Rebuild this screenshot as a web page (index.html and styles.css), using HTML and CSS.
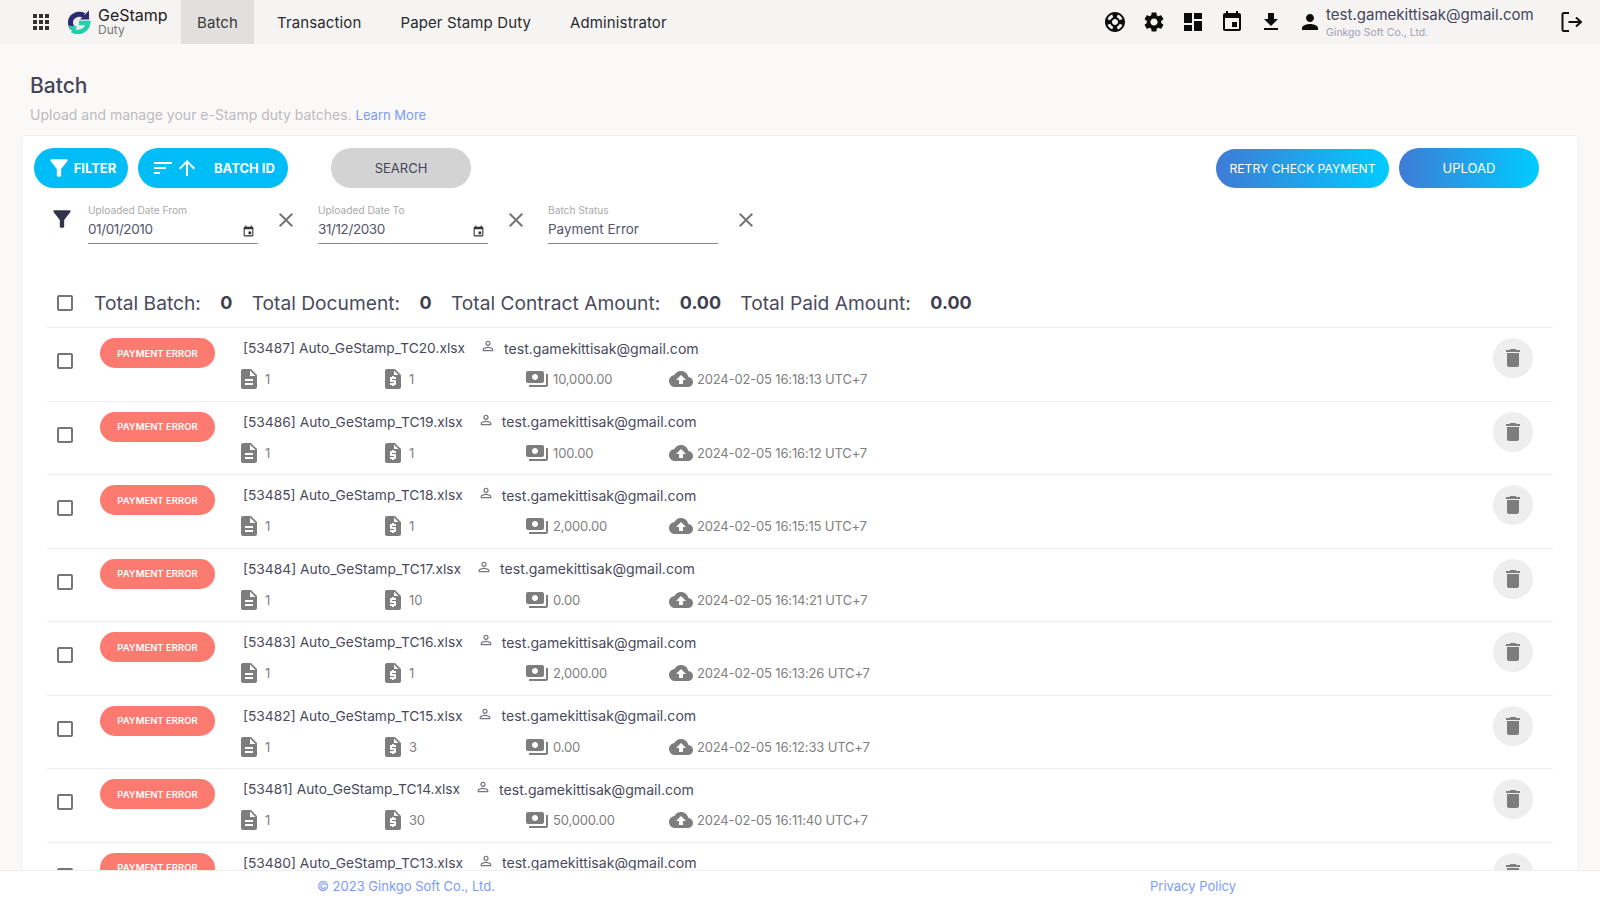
FILE: index.html
```html
<!DOCTYPE html>
<html lang="en">
<head>
<meta charset="utf-8">
<title>Batch</title>
<link rel="stylesheet" href="styles.css">
</head>
<body>
<svg class="sprite" aria-hidden="true">
<symbol id="i-apps" viewBox="0 0 24 24"><path d="M4 8h4V4H4v4zm6 12h4v-4h-4v4zm-6 0h4v-4H4v4zm0-6h4v-4H4v4zm6 0h4v-4h-4v4zm6-10v4h4V4h-4zm-6 4h4V4h-4v4zm6 6h4v-4h-4v4zm0 6h4v-4h-4v4z"/></symbol>
<symbol id="i-support" viewBox="0 0 24 24"><path d="M12 2C6.48 2 2 6.48 2 12s4.48 10 10 10 10-4.48 10-10S17.52 2 12 2zm7.46 7.12l-2.78 1.15c-.51-1.36-1.58-2.44-2.95-2.94l1.15-2.78c2.1.8 3.77 2.47 4.58 4.57zM12 15c-1.66 0-3-1.34-3-3s1.34-3 3-3 3 1.34 3 3-1.34 3-3 3zM9.13 4.54l1.17 2.78c-1.38.5-2.47 1.59-2.98 2.97L4.54 9.13c.81-2.11 2.48-3.78 4.59-4.59zM4.54 14.87l2.78-1.15c.51 1.38 1.59 2.46 2.97 2.96l-1.17 2.78c-2.1-.81-3.77-2.48-4.58-4.59zm10.34 4.59l-1.15-2.78c1.37-.51 2.45-1.59 2.95-2.97l2.78 1.17c-.81 2.1-2.48 3.77-4.58 4.58z"/></symbol>
<symbol id="i-settings" viewBox="0 0 24 24"><path d="M19.14 12.94c.04-.3.06-.61.06-.94 0-.32-.02-.64-.07-.94l2.03-1.58c.18-.14.23-.41.12-.61l-1.92-3.32c-.12-.22-.37-.29-.59-.22l-2.39.96c-.5-.38-1.03-.7-1.62-.94l-.36-2.54c-.04-.24-.24-.41-.48-.41h-3.84c-.24 0-.43.17-.47.41l-.36 2.54c-.59.24-1.13.57-1.62.94l-2.39-.96c-.22-.08-.47 0-.59.22L2.74 8.87c-.12.21-.08.47.12.61l2.03 1.58c-.05.3-.09.63-.09.94s.02.64.07.94l-2.03 1.58c-.18.14-.23.41-.12.61l1.92 3.32c.12.22.37.29.59.22l2.39-.96c.5.38 1.03.7 1.62.94l.36 2.54c.05.24.24.41.48.41h3.84c.24 0 .44-.17.47-.41l.36-2.54c.59-.24 1.13-.56 1.62-.94l2.39.96c.22.08.47 0 .59-.22l1.92-3.32c.12-.22.07-.47-.12-.61l-2.01-1.58zM12 15.6c-1.98 0-3.6-1.62-3.6-3.6s1.62-3.6 3.6-3.6 3.6 1.62 3.6 3.6-1.62 3.6-3.6 3.6z"/></symbol>
<symbol id="i-dashboard" viewBox="0 0 24 24"><path d="M3 13h8V3H3v10zm0 8h8v-6H3v6zm10 0h8V11h-8v10zm0-18v6h8V3h-8z"/></symbol>
<symbol id="i-event" viewBox="0 0 24 24"><path d="M17 12h-5v5h5v-5zM16 1v2H8V1H6v2H5c-1.11 0-1.99.9-1.99 2L3 19c0 1.1.89 2 2 2h14c1.1 0 2-.9 2-2V5c0-1.1-.9-2-2-2h-1V1h-2zm3 18H5V8h14v11z"/></symbol>
<symbol id="i-download" viewBox="0 0 24 24"><path d="M19 9h-4V3H9v6H5l7 7 7-7zM5 18v2h14v-2H5z"/></symbol>
<symbol id="i-person" viewBox="0 0 24 24"><path d="M12 12c2.21 0 4-1.79 4-4s-1.79-4-4-4-4 1.79-4 4 1.79 4 4 4zm0 2c-2.67 0-8 1.34-8 4v2h16v-2c0-2.66-5.33-4-8-4z"/></symbol>
<symbol id="i-person-o" viewBox="0 0 24 24"><path d="M12 5.9c1.16 0 2.1.94 2.1 2.1s-.94 2.1-2.1 2.1S9.9 9.16 9.9 8s.94-2.1 2.1-2.1m0 9c2.97 0 6.1 1.46 6.1 2.1v1.1H5.9V17c0-.64 3.13-2.1 6.1-2.1M12 4C9.79 4 8 5.79 8 8s1.79 4 4 4 4-1.79 4-4-1.79-4-4-4zm0 9c-2.67 0-8 1.34-8 4v3h16v-3c0-2.66-5.33-4-8-4z"/></symbol>
<symbol id="i-doc" viewBox="0 0 24 24"><path d="M14 2H6c-1.1 0-1.99.9-1.99 2L4 20c0 1.1.89 2 1.99 2H18c1.1 0 2-.9 2-2V8l-6-6zm2 16H8v-2h8v2zm0-4H8v-2h8v2zm-3-5V3.5L18.5 9H13z"/></symbol>
<symbol id="i-quote" viewBox="0 0 24 24"><path d="M14 2H6c-1.1 0-1.99.9-1.99 2L4 20c0 1.1.89 2 1.99 2H18c1.1 0 2-.9 2-2V8l-6-6zm1 10h-4v1h3c.55 0 1 .45 1 1v3c0 .55-.45 1-1 1h-1v1h-2v-1H9v-2h4v-1h-3c-.55 0-1-.45-1-1v-3c0-.55.45-1 1-1h1V9h2v1h2v2zm-2-4V3.5L17.5 8H13z"/></symbol>
<symbol id="i-pay" viewBox="0 0 24 24"><path d="M19 14V6c0-1.1-.9-2-2-2H3c-1.1 0-2 .9-2 2v8c0 1.1.9 2 2 2h14c1.1 0 2-.9 2-2zm-9-1c-1.66 0-3-1.34-3-3s1.34-3 3-3 3 1.34 3 3-1.34 3-3 3zm13-6v11c0 1.1-.9 2-2 2H4v-2h17V7h2z"/></symbol>
<symbol id="i-cloud" viewBox="0 0 24 24"><path d="M19.35 10.04C18.67 6.59 15.64 4 12 4 9.11 4 6.6 5.64 5.35 8.04 2.34 8.36 0 10.91 0 14c0 3.31 2.69 6 6 6h13c2.76 0 5-2.24 5-5 0-2.64-2.05-4.78-4.65-4.96zM14 13v4h-4v-4H7l5-5 5 5h-3z"/></symbol>
<symbol id="i-delete" viewBox="0 0 24 24"><path d="M6 19c0 1.1.9 2 2 2h8c1.1 0 2-.9 2-2V7H6v12zM19 4h-3.5l-1-1h-5l-1 1H5v2h14V4z"/></symbol>
<symbol id="i-filter" viewBox="0 0 24 24"><path d="M4.25 5.61C6.27 8.2 10 13 10 13v6c0 .55.45 1 1 1h2c.55 0 1-.45 1-1v-6s3.72-4.8 5.74-7.39c.51-.66.04-1.61-.79-1.61H5.04c-.83 0-1.3.95-.79 1.61z"/></symbol>
<symbol id="i-sort" viewBox="0 0 24 24"><path d="M3 18h6v-2H3v2zM3 6v2h18V6H3zm0 7h12v-2H3v2z"/></symbol>
<symbol id="i-up" viewBox="0 0 24 24"><path d="M4 12l1.41 1.41L11 7.83V20h2V7.83l5.58 5.59L20 12l-8-8-8 8z"/></symbol>
<symbol id="i-close" viewBox="0 0 24 24"><path d="M19 6.41L17.59 5 12 10.59 6.41 5 5 6.41 10.59 12 5 17.59 6.41 19 12 13.41 17.59 19 19 17.59 13.41 12z"/></symbol>
</svg>

<div class="app">
  <header class="topbar">
    <svg class="ico apps"><use href="#i-apps"/></svg>
    <div class="logo">
      <svg class="logo-mark" viewBox="0 0 24 24">
        <circle cx="12" cy="12" r="12" fill="#ecebea"/>
        <path d="M17 5.500C11 2.500 3 6 3.500 13c.2 2.500 1 4 2.500 5" fill="none" stroke="#2b2a72" stroke-width="5"/>
        <path d="M22 .5v9h-9z" fill="#2b2a72"/>
        <path d="M5 20.500c7 3.500 15 .5 16-7.500H12" fill="none" stroke="#22cfae" stroke-width="4.600"/>
        <path d="M1 15.500l9 1-3 6z" fill="#22cfae"/>
      </svg>
      <div class="logo-text"><span class="logo-name">GeStamp</span><span class="logo-sub">Duty</span></div>
    </div>
    <nav class="nav">
      <a class="nav-item active">Batch</a>
      <a class="nav-item">Transaction</a>
      <a class="nav-item">Paper Stamp Duty</a>
      <a class="nav-item">Administrator</a>
    </nav>
    <div class="top-actions">
      <svg class="ico"><use href="#i-support"/></svg>
      <svg class="ico"><use href="#i-settings"/></svg>
      <svg class="ico"><use href="#i-dashboard"/></svg>
      <svg class="ico"><use href="#i-event"/></svg>
      <svg class="ico"><use href="#i-download"/></svg>
      <svg class="ico"><use href="#i-person"/></svg>
    </div>
    <div class="account">
      <span class="account-mail">test.gamekittisak@gmail.com</span>
      <span class="account-org">Ginkgo Soft Co., Ltd.</span>
    </div>
    <svg class="logout" viewBox="0 0 24 24"><path d="M10 3H5a1.500 1.500 0 0 0-1.500 1.500v15A1.500 1.500 0 0 0 5 21h5M9.500 12H22M17 7.500 22 12l-5 4.500" fill="none" stroke="#111" stroke-width="2"/></svg>
  </header>

  <main class="main">
    <div class="page-head">
      <h1 class="page-title">Batch</h1>
      <p class="page-sub">Upload and manage your e-Stamp duty batches. <a class="link">Learn More</a></p>
    </div>
    <section class="card">
      <div class="toolbar">
        <button class="btn cyan btn-filter"><svg class="ico-btn"><use href="#i-filter"/></svg>FILTER</button>
        <button class="btn cyan btn-sort"><svg class="ico-btn"><use href="#i-sort"/></svg><svg class="ico-btn"><use href="#i-up"/></svg><span class="sort-label">BATCH ID</span></button>
        <button class="btn btn-search">SEARCH</button>
        <button class="btn grad btn-retry">RETRY CHECK PAYMENT</button>
        <button class="btn grad btn-upload">UPLOAD</button>
      </div>

      <div class="filters">
        <svg class="filter-ico"><use href="#i-filter"/></svg>
        <div class="field"><label class="field-label">Uploaded Date From</label><div class="field-value date">01/01/2010<svg class="ico-cal"><use href="#i-event"/></svg></div></div>
        <svg class="ico-x"><use href="#i-close"/></svg>
        <div class="field"><label class="field-label">Uploaded Date To</label><div class="field-value date">31/12/2030<svg class="ico-cal"><use href="#i-event"/></svg></div></div>
        <svg class="ico-x"><use href="#i-close"/></svg>
        <div class="field"><label class="field-label">Batch Status</label><div class="field-value">Payment Error</div></div>
        <svg class="ico-x"><use href="#i-close"/></svg>
      </div>

      <div class="summary">
        <span class="check"></span>
        <span class="sum-label first">Total Batch:</span><b class="sum-val">0</b>
        <span class="sum-label">Total Document:</span><b class="sum-val">0</b>
        <span class="sum-label">Total Contract Amount:</span><b class="sum-val">0.00</b>
        <span class="sum-label">Total Paid Amount:</span><b class="sum-val">0.00</b>
      </div>

      <div class="row">
        <span class="check"></span><span class="badge">PAYMENT ERROR</span>
        <div class="info">
          <div class="line1"><span class="name">[53487] Auto_GeStamp_TC20.xlsx</span><svg class="ico-user"><use href="#i-person-o"/></svg><span class="mail">test.gamekittisak@gmail.com</span></div>
          <div class="line2">
            <span class="cell"><svg class="ico-m"><use href="#i-doc"/></svg>1</span>
            <span class="cell"><svg class="ico-m"><use href="#i-quote"/></svg>1</span>
            <span class="cell"><svg class="ico-m"><use href="#i-pay"/></svg>10,000.00</span>
            <span class="cell"><svg class="ico-m"><use href="#i-cloud"/></svg>2024-02-05 16:18:13 UTC+7</span>
          </div>
        </div>
        <span class="del"><svg class="ico-del"><use href="#i-delete"/></svg></span>
      </div>
      <div class="row">
        <span class="check"></span><span class="badge">PAYMENT ERROR</span>
        <div class="info">
          <div class="line1"><span class="name">[53486] Auto_GeStamp_TC19.xlsx</span><svg class="ico-user"><use href="#i-person-o"/></svg><span class="mail">test.gamekittisak@gmail.com</span></div>
          <div class="line2">
            <span class="cell"><svg class="ico-m"><use href="#i-doc"/></svg>1</span>
            <span class="cell"><svg class="ico-m"><use href="#i-quote"/></svg>1</span>
            <span class="cell"><svg class="ico-m"><use href="#i-pay"/></svg>100.00</span>
            <span class="cell"><svg class="ico-m"><use href="#i-cloud"/></svg>2024-02-05 16:16:12 UTC+7</span>
          </div>
        </div>
        <span class="del"><svg class="ico-del"><use href="#i-delete"/></svg></span>
      </div>
      <div class="row">
        <span class="check"></span><span class="badge">PAYMENT ERROR</span>
        <div class="info">
          <div class="line1"><span class="name">[53485] Auto_GeStamp_TC18.xlsx</span><svg class="ico-user"><use href="#i-person-o"/></svg><span class="mail">test.gamekittisak@gmail.com</span></div>
          <div class="line2">
            <span class="cell"><svg class="ico-m"><use href="#i-doc"/></svg>1</span>
            <span class="cell"><svg class="ico-m"><use href="#i-quote"/></svg>1</span>
            <span class="cell"><svg class="ico-m"><use href="#i-pay"/></svg>2,000.00</span>
            <span class="cell"><svg class="ico-m"><use href="#i-cloud"/></svg>2024-02-05 16:15:15 UTC+7</span>
          </div>
        </div>
        <span class="del"><svg class="ico-del"><use href="#i-delete"/></svg></span>
      </div>
      <div class="row">
        <span class="check"></span><span class="badge">PAYMENT ERROR</span>
        <div class="info">
          <div class="line1"><span class="name">[53484] Auto_GeStamp_TC17.xlsx</span><svg class="ico-user"><use href="#i-person-o"/></svg><span class="mail">test.gamekittisak@gmail.com</span></div>
          <div class="line2">
            <span class="cell"><svg class="ico-m"><use href="#i-doc"/></svg>1</span>
            <span class="cell"><svg class="ico-m"><use href="#i-quote"/></svg>10</span>
            <span class="cell"><svg class="ico-m"><use href="#i-pay"/></svg>0.00</span>
            <span class="cell"><svg class="ico-m"><use href="#i-cloud"/></svg>2024-02-05 16:14:21 UTC+7</span>
          </div>
        </div>
        <span class="del"><svg class="ico-del"><use href="#i-delete"/></svg></span>
      </div>
      <div class="row">
        <span class="check"></span><span class="badge">PAYMENT ERROR</span>
        <div class="info">
          <div class="line1"><span class="name">[53483] Auto_GeStamp_TC16.xlsx</span><svg class="ico-user"><use href="#i-person-o"/></svg><span class="mail">test.gamekittisak@gmail.com</span></div>
          <div class="line2">
            <span class="cell"><svg class="ico-m"><use href="#i-doc"/></svg>1</span>
            <span class="cell"><svg class="ico-m"><use href="#i-quote"/></svg>1</span>
            <span class="cell"><svg class="ico-m"><use href="#i-pay"/></svg>2,000.00</span>
            <span class="cell"><svg class="ico-m"><use href="#i-cloud"/></svg>2024-02-05 16:13:26 UTC+7</span>
          </div>
        </div>
        <span class="del"><svg class="ico-del"><use href="#i-delete"/></svg></span>
      </div>
      <div class="row">
        <span class="check"></span><span class="badge">PAYMENT ERROR</span>
        <div class="info">
          <div class="line1"><span class="name">[53482] Auto_GeStamp_TC15.xlsx</span><svg class="ico-user"><use href="#i-person-o"/></svg><span class="mail">test.gamekittisak@gmail.com</span></div>
          <div class="line2">
            <span class="cell"><svg class="ico-m"><use href="#i-doc"/></svg>1</span>
            <span class="cell"><svg class="ico-m"><use href="#i-quote"/></svg>3</span>
            <span class="cell"><svg class="ico-m"><use href="#i-pay"/></svg>0.00</span>
            <span class="cell"><svg class="ico-m"><use href="#i-cloud"/></svg>2024-02-05 16:12:33 UTC+7</span>
          </div>
        </div>
        <span class="del"><svg class="ico-del"><use href="#i-delete"/></svg></span>
      </div>
      <div class="row">
        <span class="check"></span><span class="badge">PAYMENT ERROR</span>
        <div class="info">
          <div class="line1"><span class="name">[53481] Auto_GeStamp_TC14.xlsx</span><svg class="ico-user"><use href="#i-person-o"/></svg><span class="mail">test.gamekittisak@gmail.com</span></div>
          <div class="line2">
            <span class="cell"><svg class="ico-m"><use href="#i-doc"/></svg>1</span>
            <span class="cell"><svg class="ico-m"><use href="#i-quote"/></svg>30</span>
            <span class="cell"><svg class="ico-m"><use href="#i-pay"/></svg>50,000.00</span>
            <span class="cell"><svg class="ico-m"><use href="#i-cloud"/></svg>2024-02-05 16:11:40 UTC+7</span>
          </div>
        </div>
        <span class="del"><svg class="ico-del"><use href="#i-delete"/></svg></span>
      </div>
      <div class="row">
        <span class="check"></span><span class="badge">PAYMENT ERROR</span>
        <div class="info">
          <div class="line1"><span class="name">[53480] Auto_GeStamp_TC13.xlsx</span><svg class="ico-user"><use href="#i-person-o"/></svg><span class="mail">test.gamekittisak@gmail.com</span></div>
        </div>
        <span class="del"><svg class="ico-del"><use href="#i-delete"/></svg></span>
      </div>
    </section>
  </main>

  <footer class="footer">
    <span class="foot-left">© 2023 Ginkgo Soft Co., Ltd.</span>
    <span class="foot-right">Privacy Policy</span>
  </footer>
</div>
</body>
</html>
```

FILE: styles.css
```css
* { box-sizing: border-box; }
html, body { margin: 0; height: 100%; }
body { font-family: Inter, "Noto Sans", "Liberation Sans", sans-serif; color: #45455a; background: #faf9f8; overflow: hidden; }
.sprite { display: none; }
.app { height: 900px; display: flex; flex-direction: column; }

/* top bar */
.topbar { height: 44px; flex: none; display: flex; align-items: center; background: #f5f4f3; padding-left: 29px; }
.ico { width: 24px; height: 24px; fill: #0c0c0c; flex: none; }
.apps { fill: #323130; }
.logo { display: flex; align-items: center; margin-left: 14px; width: 114px; }
.logo-mark { width: 24px; height: 24px; flex: none; }
.logo-text { display: flex; flex-direction: column; margin-left: 7px; }
.logo-name { font-size: 16px; line-height: 15px; color: #222; }
.logo-sub { font-size: 12px; line-height: 13px; color: #777; }
.nav { display: flex; height: 44px; }
.nav-item { display: flex; align-items: center; padding: 0 16px; margin-right: 7px; font-size: 15px; letter-spacing: .12px; color: #2b2b2b; }
.nav-item.active { background: #e1e0de; color: #3a3a3a; }
.top-actions { display: flex; gap: 15px; margin-left: auto; }
.account { display: flex; flex-direction: column; margin-left: 4px; width: 233px; }
.account-mail { font-size: 15px; line-height: 20px; letter-spacing: .02px; color: #45455a; }
.account-org { font-size: 10.5px; line-height: 15px; color: #a19eb4; }
.logout { width: 24px; height: 24px; flex: none; margin-right: 17px; }

/* page heading */
.main { flex: 1; min-height: 0; overflow: hidden; }
.page-head { height: 91px; padding: 30px 0 0 30px; }
.page-title { margin: 0; font-size: 21px; line-height: 24px; font-weight: 500; color: #44445a; }
.page-sub { margin: 7px 0 0; font-size: 14px; line-height: 20px; color: #bdb9c1; }
.link { color: #7b9bff; font-size: 13px; }

/* card */
.card { margin: 0 21px; padding: 12px 25px 0; background: #fff; border: 1px solid #f1f0ef; border-radius: 5px; }
.toolbar { display: flex; align-items: center; height: 40px; margin: 0 14px 0 -13px; }
.btn { height: 40px; border: 0; border-radius: 20px; font: inherit; font-size: 13px; color: #fff; display: flex; align-items: center; justify-content: center; padding: 0; }
.cyan { background: #00bdf7; font-weight: 700; }
.grad { background: linear-gradient(90deg, #3f7bd6, #00ccff); }
.ico-btn { width: 24px; height: 24px; fill: #fff; flex: none; }
.btn-filter { width: 94px; margin-right: 10px; gap: 2px; }
.btn-filter .ico-btn { width: 26px; height: 26px; }
.btn-sort { width: 150px; padding-left: 13px; justify-content: flex-start; }
.sort-label { margin-left: 15px; }
.btn-search { width: 140px; margin-left: 43px; background: #d3d3d3; color: #45455a; }
.btn-retry { width: 173px; margin-left: auto; margin-right: 10px; height: 39px; font-size: 12.2px; }
.btn-upload { width: 140px; }

/* filters */
.filters { display: flex; align-items: flex-start; height: 90px; padding-top: 16px; margin-left: 2px; }
.filter-ico { width: 26px; height: 26px; fill: #32324a; margin: 2px 0 0; flex: none; }
.field { width: 170px; height: 40px; margin-left: 13px; border-bottom: 1px solid #8a8a8a; }
.field-label { display: block; font-size: 10.2px; line-height: 13px; color: #a9a9a9; }
.field-value { position: relative; font-size: 13.5px; line-height: 20px; margin-top: 2px; color: #54546a; }
.field-value.date { letter-spacing: -.4px; }
.ico-cal { position: absolute; right: 3px; top: 6px; width: 13px; height: 13px; fill: #333; }
.ico-x { width: 24px; height: 24px; fill: #777; margin: 4px 20px 0 16px; flex: none; }
.ico-x + .field { margin-left: 0; }

/* summary */
.summary { display: flex; align-items: center; height: 50px; padding-left: 10px; border-bottom: 1px solid #edeef3; }
.sum-label { font-size: 19.2px; margin-left: 19.2px; color: #4a4a5c; }
.sum-label.first { margin-left: 21px; }
.sum-val { font-size: 18px; font-weight: 700; margin-left: 19.5px; color: #3f3f50; }

.check { display: block; width: 16px; height: 16px; border: 2px solid #757575; border-radius: 2px; flex: none; }

/* rows */
.row { display: grid; grid-template-columns: 53px 137px 1fr 60px; height: 73.5px; border-bottom: 1.5px solid #edeef3; align-items: start; }
.row .check { margin: 25px 0 0 10px; }
.badge { width: 115px; height: 30px; border-radius: 15px; margin-top: 10px; background: #fd7a70; color: #fff; font-size: 9.5px; font-weight: 600; display: flex; align-items: center; justify-content: center; }
.info { padding-top: 10px; }
.line1 { display: flex; align-items: center; height: 20px; padding-left: 6px; color: #4a4a5c; }
.name { font-size: 13.75px; }
.ico-user { width: 16px; height: 16px; fill: #77777f; margin: -4px 0 0 15px; flex: none; }
.mail { margin-left: 8px; font-size: 14.1px; }
.line2 { display: grid; grid-template-columns: repeat(4, 144px); margin-top: 9px; font-size: 13px; letter-spacing: -.16px; color: #808080; }
.cell { display: flex; align-items: center; gap: 4px; height: 24px; white-space: nowrap; }
.ico-m { width: 24px; height: 24px; fill: #7d7d7d; flex: none; }
.del { width: 40px; height: 40px; margin-top: 10px; border-radius: 50%; background: #eeeeee; display: flex; align-items: center; justify-content: center; }
.ico-del { width: 24px; height: 24px; fill: #7d7d7d; }

/* footer */
.footer { height: 30px; flex: none; display: grid; grid-template-columns: 812px 762px; background: #fff; border-top: 1px solid #eeeeee; font-size: 13px; color: #7b9bff; align-items: center; text-align: center; }
```
